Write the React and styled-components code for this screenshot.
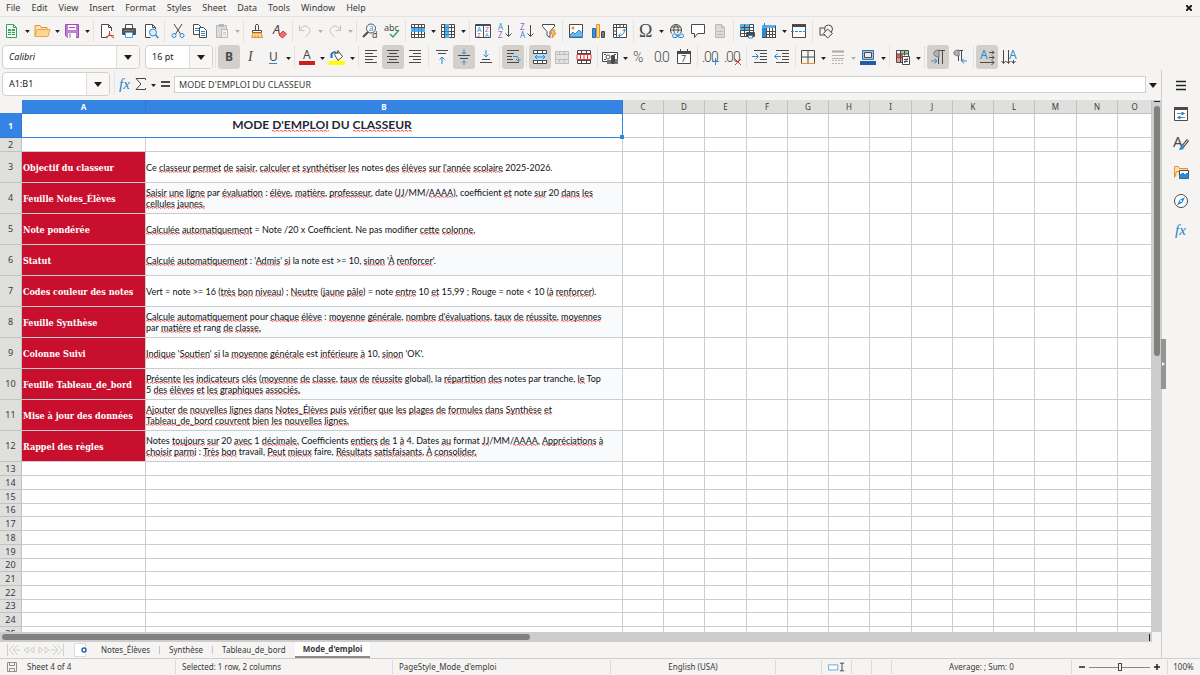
import React, { useState } from 'react';
import styled, { createGlobalStyle, css } from 'styled-components';

const UI_FONT = '"Noto Sans", "Open Sans", sans-serif';
const CELL_FONT = 'Lato, "Noto Sans", sans-serif';
const LABEL_FONT = '"DejaVu Serif Condensed", "DejaVu Serif", serif';

const INK = '#4a4a4a';
const BLUE = '#2a8bd4';
const ORANGE = '#e8902c';
const RED = '#d8383c';
const PURPLE = '#a85cc0';

const GlobalStyle = createGlobalStyle`
  * { box-sizing: border-box; }
  body {
    margin: 0;
    background: #f5f4f2;
    color: #3a3a3a;
    font: 9px/12px ${UI_FONT};
  }
  button, input {
    margin: 0;
    padding: 0;
    border: 0;
    background: none;
    color: inherit;
    font: inherit;
  }
`;

/* ---------- icons ---------- */

const s = (d, stroke = INK, fill = 'none', width = 1) => (
  <path d={d} stroke={stroke} fill={fill} strokeWidth={width} />
);
const t = (x, y, size, fill, text, extra = {}) => (
  <text x={x} y={y} fontSize={size} fill={fill} {...extra}>{text}</text>
);
const serif = { fontFamily: 'Liberation Serif, serif' };
const light = { fontFamily: 'Roboto, sans-serif', fontWeight: 300 };
const page = 'M3.5 1.5h6l3 3v10h-9z';
const grid = 'M1.5 1.5h13v13h-13zM1.5 4.5h13M1.5 8.5h13M1.5 11.5h13M4.5 1.5v13M8.5 1.5v13M11.5 1.5v13';

const ICONS = {
  new: <>{s('M2.5 1.5h7l3 3v10h-10z', '#3aa655', '#fff')}{s('M9.5 1.5v3h3', '#3aa655')}<rect x="4" y="6" width="7" height="6" fill="#3aa655" />{s('M4 8.5h7M4 10.5h7M7.5 6v6', '#d8f0dd')}</>,
  open: <>{s('M1 13.5v-11h5l1 2h6v2', ORANGE, '#fbe3b5')}{s('M1 13.5l2-7h13l-2 7z', '#eda648', '#fbd795')}</>,
  save: <>{s('M1.5 1.5h13v13h-11l-2-2z', '#9b4fb5', '#c27fd6')}<rect x="4" y="2" width="8" height="5" fill="#fff" /><rect x="4" y="10" width="8" height="5" fill="#fff" />{s('M6 10.5v4M5 4.5h6', '#9b4fb5')}</>,
  pdf: <>{s('M12.5 8v-3.5l-3-3h-7v13h6', INK, '#fff')}{s('M9.5 1.5v3h3')}{s('M7 15c3-2 4-4 3.5-7M7 14c3-2 5-2 8-1M10 10c1 2 3 4 5 5', RED)}</>,
  print: <>{s('M4.5 5v-3.5h7v3.5', INK, '#fff')}<rect x="1" y="5" width="14" height="7" rx="1" fill="#4f5356" />{s('M4.5 9.5h7v5h-7z', '#4a9fdc', '#fff')}{s('M3 7.5h10', '#7d8184')}</>,
  preview: <>{s('M12.5 6v-1.5l-3-3h-7v13h5', INK, '#fff')}{s('M9.5 1.5v3h3')}<circle cx="10" cy="9.5" r="3.5" stroke={BLUE} fill="#d8ecf9" />{s('M12.5 12l3 3', BLUE, 'none', 1.5)}</>,
  cut: <>{s('M4 1l6.5 10M12 1l-6.5 10', INK)}<circle cx="4" cy="12.5" r="2" stroke={BLUE} /><circle cx="12" cy="12.5" r="2" stroke={BLUE} /></>,
  copy: <>{s('M1.5 1.5h5l3 3v7h-8z', INK, '#fff')}{s('M3 5.5h4M3 7.5h4', BLUE)}{s('M7.5 4.5h4l3 3v7h-7z', INK, '#fff')}{s('M9 8.5h4M9 10.5h4M9 12.5h4', BLUE)}</>,
  paste: <>{s('M2.5 2.5h10v12h-10z', '#b8b8b8', '#dcdcdc')}<rect x="5" y="1" width="5" height="3" fill="#b8b8b8" />{s('M7.5 6.5h6v8h-6z', '#b8b8b8', '#f4f4f4')}{s('M9 9.5h3M9 11.5h3', '#c4c4c4')}</>,
  brush: <>{s('M6.5 7v-4.5c0-1.500 3-1.500 3 0v4.500', INK)}{s('M3.5 7.5h9v2h-9z', INK, '#fff')}{s('M4 10l-1.500 4.500h11l-1.500-4.500z', ORANGE, '#fbd795')}{s('M6 14v-2M9 14v-2', ORANGE)}</>,
  clear: <>{t(2, 11, 13, INK, 'A', { fontStyle: 'italic' })}{s('M8 12l4-4 3.5 3-4 4z', RED, '#ef6b6e')}</>,
  undo: s('M2.5 2.5v5h5M2.5 7.5c2-4 6-6 9-3 3 3 1 6-3 9', '#c2c2c2'),
  redo: s('M13.5 2.5v5h-5M13.5 7.5c-2-4-6-6-9-3-3 3-1 6 3 9', '#c2c2c2'),
  find: <><circle cx="9" cy="5.5" r="4.5" stroke={INK} fill="#fff" />{s('M6 9l-5 5', INK, 'none', 2)}{t(7, 8, 8, BLUE, 'a')}{t(10, 15, 9, INK, 'd')}</>,
  spell: <>{t(0, 8, 9, INK, 'abc')}{s('M6 11l3 3 6-7', '#36a862', 'none', 1.5)}</>,
  rows: <><rect x="2" y="2" width="12" height="12" fill="#fff" />{s(grid)}<rect x="1" y="5" width="14" height="4" fill="#58b0ec" />{s('M4.5 5v4M8.5 5v4M11.5 5v4', BLUE)}</>,
  cols: <><rect x="2" y="2" width="12" height="12" fill="#fff" />{s(grid)}<rect x="5" y="1" width="4" height="14" fill="#58b0ec" />{s('M5 4.5h4M5 8.5h4M5 11.5h4', BLUE)}</>,
  sort: <>{s('M.5 1.5h15v13h-15zM8.5 1.5v13', INK, '#fff')}{s('M0 2.5h16', INK)}{t(2, 9, 7, BLUE, 'A')}{t(2, 14, 6, PURPLE, 'Z')}{t(10, 9, 7, PURPLE, 'Z')}{t(10, 14, 6, BLUE, 'A')}</>,
  asc: <>{t(1, 7, 8, BLUE, 'A')}{t(1, 15, 8, PURPLE, 'Z')}{s('M11.5 2v11M8.5 10.5l3 3 3-3')}</>,
  desc: <>{t(1, 7, 8, PURPLE, 'Z')}{t(1, 15, 8, BLUE, 'A')}{s('M11.5 2v11M8.5 10.5l3 3 3-3')}</>,
  filter: <>{s('M1.5 1.5h12v2l-4.5 5v6l-3-2v-4l-4.5-5z', INK, '#fff')}{s('M11 7h3l-1 3h2l-4 5 1-4h-2z', ORANGE, '#fbc978')}</>,
  image: <>{s('M1.5 1.5h13v13h-13z', INK, '#fff')}<circle cx="5" cy="5" r="1.5" fill={ORANGE} />{s('M2 12l3-3 2 2 4-4 3.5 3v4h-12.5z', BLUE, '#6fb8ea')}</>,
  chart: <>{s('M2.5 5.5h3v9h-3z', '#1b6fb5', '#3b97dc')}{s('M6.5 1.5h3v13h-3z', ORANGE, '#fbd18a')}{s('M11.5 8.5h3v6h-3z', INK, '#77797b')}</>,
  pivot: <>{s('M1.5 1.5h13v13h-13zM1.5 4.5h13M4.5 1.5v13M8 1.5v3M11.5 1.5v3M1.5 8h3M1.5 11.5h3', INK, '#fff')}{s('M6.5 12.5c4 0 6-2 6-6M10.5 8l2-2 2 2M8.5 10.5l-2 2 2 2', BLUE)}</>,
  omega: t(1, 14, 18, INK, 'Ω', serif),
  link: <><circle cx="8" cy="7" r="5.5" stroke={INK} />{s('M2.5 7h11M3.5 4h9M8 1.5c-3 3-3 7 0 11M8 1.5c3 3 3 7 0 11')}<rect x="4" y="10" width="12" height="6" fill="#f5f4f2" /><rect x="4.5" y="11" width="5" height="3.5" rx="1.5" stroke={BLUE} /><rect x="10" y="11" width="5.5" height="3.5" rx="1.5" stroke={BLUE} />{s('M7.5 12.7h5', BLUE)}</>,
  comment: s('M1.5 1.5h13v9h-7l-3 4v-4h-3z', INK, '#fff'),
  header: <>{s(page, '#b9b9b9', '#dadada')}{s('M9.5 1.5v3h3M5 8.5h6M5 11.5h6', '#bdbdbd')}</>,
  printArea: <>{s('M1.5 1.5h13v12h-13z', INK, '#fff')}<rect x="1" y="1" width="10" height="7" fill="#58b0ec" />{s('M1.5 4.5h13M1.5 7.5h13M1.5 10.5h13M5.5 1.5v12M10.5 1.5v12')}<rect x="7" y="9" width="9" height="5" rx="1" fill={INK} />{s('M9.5 12.5h4v2.5h-4z', BLUE, '#fff')}</>,
  freeze: <><rect x="4" y="4" width="11" height="11" fill="#fff" /><rect x="1" y="4" width="4" height="11" fill="#2a8bd4" /><rect x="1" y="2" width="14" height="3" fill="#58b0ec" />{s('M5.5 5v10M8.5 5v10M11.5 5v10M14.5 3v12M5 8.5h10M5 11.5h10M1 14.5h14')}{s('M3.5 0v4', BLUE)}</>,
  split: <>{s('M1.5 1.5h13v13h-13z', INK, '#fff')}<rect x="1" y="1" width="14" height="3" fill={INK} /><path d="M0 8.5h16" stroke={BLUE} strokeDasharray="3 1" /></>,
  shapes: <><rect x="2" y="5" width="8" height="7" stroke={INK} /><circle cx="10.5" cy="6" r="4" stroke={INK} fill="#f5f4f2" />{s('M9.5 6l5 4.5-5 4.5-4-4.5z', INK, '#f5f4f2')}</>,

  bold: t(4, 12, 12, INK, 'B', { fontWeight: 700 }),
  italic: t(5, 12, 14, INK, 'I', { ...serif, fontStyle: 'italic' }),
  underline: <>{t(4, 12, 12, INK, 'U')}{s('M4 14.5h8', BLUE)}</>,
  fontColor: <>{t(4, 10, 12, INK, 'A')}<rect x="0" y="12" width="16" height="4" fill="#c9211e" /></>,
  fill: <>{s('M5.5 5.5l4-3 4 5-4.5 4z', INK, '#fff')}{s('M9 5v-4')}{s('M2.5 9v-4c1-2 3-2 5-1', '#1f6fb5', 'none', 2)}<rect x="0" y="12" width="16" height="4" fill="#ffff00" /></>,
  left: s('M2 1.5h12M2 4.5h8M2 7.5h12M2 10.5h8M2 13.5h12'),
  center: s('M2 1.5h12M4 4.5h8M2 7.5h12M4 10.5h8M2 13.5h12'),
  right: s('M2 1.5h12M6 4.5h8M2 7.5h12M6 10.5h8M2 13.5h12'),
  top: <>{s('M2 1.5h12M4 4.5h8')}{s('M8 15v-7M5.5 10.5l2.5-2.5 2.5 2.5', BLUE)}</>,
  middle: <>{s('M2 6.5h12M4 9.5h8')}{s('M8 0v4M6 3l2 2 2-2M8 16v-4M6 13.5l2-2 2 2', BLUE)}</>,
  bottom: <>{s('M4 10.5h8M2 13.5h12')}{s('M8 1v7M5.5 5.5l2.5 2.5 2.5-2.5', BLUE)}</>,
  wrap: <>{s('M2 1.5h12M2 4.5h7M2 7.5h5M2 10.5h6M2 13.5h12')}{s('M8 7.5h3c2 0 2.5 1 2.5 4M11 10l2.5 2.5 2-2.5', BLUE)}</>,
  merge: <>{s('M1.5 1.5h13v13h-13zM1.5 4.5h13M1.5 11.5h13M5.5 1.5v3M10.5 1.5v3M5.5 11.5v3M10.5 11.5v3', INK, '#fff')}<rect x="1" y="5" width="14" height="6" fill="#b9dff7" />{s('M3 8h10M5 6l-2 2 2 2M11 6l2 2-2 2', BLUE)}</>,
  mergeOff: s('M1.5 2.5h13v12h-13zM1.5 5.5h13M1.5 10.5h13M5.5 2.5v3M10.5 2.5v3M5.5 10.5v3M10.5 10.5v3', '#bcbcbc', '#e2e2e2'),
  unmerge: <>{s('M1.5 1.5h13v13h-13zM1.5 4.5h13M1.5 11.5h13M5.5 1.5v13M10.5 1.5v13', INK, '#fff')}{s('M1 5.5h14v5h-14zM4.5 5v6M8 5v6M11.5 5v6', RED, '#fff')}</>,
  currency: <>{s('M.5 3.5h15v9h-15z', INK, '#fff')}<circle cx="6" cy="8" r="2" stroke={INK} />{s('M2 5.5h2M12 5.5h2M2 10.5h2')}<rect x="9" y="6" width="4" height="9" rx="1" fill={INK} /><rect x="5" y="11" width="4" height="4" fill="#777" /><rect x="13" y="10" width="3" height="5" fill="#777" /></>,
  percent: t(1, 13, 14, INK, '%', light),
  number: <>{t(0, 13, 14, INK, '0', light)}{t(6, 13, 14, INK, '.', light)}{t(8, 13, 14, INK, '0', light)}</>,
  date: <>{s('M1.5 2.5h13v12h-13z', INK, '#fff')}<rect x="1" y="2" width="14" height="3" fill={INK} />{s('M4.5 0v4M11.5 0v4', INK, 'none')}{t(5, 13, 9, INK, '7')}</>,
  addDec: <>{t(-1, 13, 14, INK, '.', light)}{t(1, 13, 14, INK, '0', light)}{t(8, 13, 14, INK, '0', light)}{s('M12.5 9v7M9 12.5h7', BLUE)}</>,
  delDec: <>{t(-1, 13, 14, INK, '.', light)}{t(1, 13, 14, INK, '0', light)}{t(8, 13, 14, INK, '0', light)}{s('M10 10l6 6M16 10l-6 6', RED)}</>,
  indent: <>{s('M2 1.5h13M8 4.5h7M8 7.5h7M8 10.5h7M2 13.5h13')}{s('M0 7.5h6M3.5 4.5l3 3-3 3', BLUE)}</>,
  outdent: <>{s('M2 1.5h13M8 4.5h7M8 7.5h7M8 10.5h7M2 13.5h13')}{s('M7 7.5h-6M3.5 4.5l-3 3 3 3', BLUE)}</>,
  borders: <>{s('M1.5 1.5h13M1.5 1.5v13M14.5 1.5v13M8 1.5v13M1.5 8h13')}{s('M1 14.5h14', ORANGE)}</>,
  lineStyle: <>{s('M2 2.5h12', '#aaa', 'none', 2)}{s('M2 6.5h12M2 9.5h12', '#b5b5b5')}<path d="M2 11.5h12M2 14.5h12" stroke="#b5b5b5" strokeDasharray="2 1" /></>,
  lineColor: <>{s('M2.5 1.5h11v9h-11z', '#2a6db0', '#a9c4dc', 1)}{s('M4.5 3.5h7v5h-7z', INK, '#ececec')}<rect x="0" y="12" width="16" height="4" fill="#1f5fa5" /></>,
  conditional: <>{s('M1.5 1.5h12v12h-12z', INK, '#fff')}<rect x="2" y="5" width="6" height="4" fill="#e85a5c" /><rect x="5" y="2" width="8" height="3" fill="#8fd19a" /><rect x="2" y="10" width="6" height="3" fill="#f3a08a" />{s('M1.5 5h12M1.5 9h6M5.5 1.5v12M9.5 1.5v5')}{s('M7.5 7.5h7v8h-7z', INK, '#fff')}{s('M9 10.5h4M9 12.5h4M12.5 9l-3 5')}</>,
  ltr: <>{s('M8.5 15v-13.5M12.5 15v-13.5M7 1.5h8')}<path d="M9 1c-7 0-7 7 0 7z" fill="#b3b3b3" stroke="#777" />{s('M1 12h6M4.5 9.5l2.5 2.5-2.5 2.5', BLUE)}</>,
  rtl: <>{s('M6.5 12v-10.5M9.5 12v-10.5M5 1.5h6')}<path d="M7 1c-7 0-7 6 0 6z" fill="#b3b3b3" stroke="#777" />{s('M15 12h-5M12 9.5l-2.5 2.5 2.5 2.5', BLUE)}</>,
  horizontal: <>{t(1, 10, 12, BLUE, 'A')}{s('M10 3.5h5M13 1.5l2 2-2 2M10 8.5h5M13 6.5l2 2-2 2M1 13.5h14M12.5 11l2.5 2.5-2.5 2.5')}</>,
  vertical: <>{t(8, 10, 12, BLUE, 'A')}{s('M2.5 1v13M.5 12l2 2.5 2-2.5M7.5 1v13M5.5 12l2 2.5 2-2.5M12.5 11v3M10.5 12l2 2.5 2-2.5')}</>,

  fx: t(2, 13, 15, '#2380c8', 'fx', { ...serif, fontStyle: 'italic' }),
  sigma: s('M12.5 4v-1.5h-9.5l5 5.5-5 5.5h9.5v-1.5'),
  equals: s('M4 6h9M4 10h9', INK, 'none', 2),
  menu: s('M3 4.5h10M3 8.5h10M3 12.5h10', '#222', 'none', 1.5),
  properties: <>{s('M1.5 1.5h13v13h-13z', INK, '#fff')}<rect x="1" y="1" width="14" height="3" fill={INK} />{s('M4 7.5h8M4 11.5h8', '#888')}{s('M9.5 6v3M6.5 10v3', BLUE, 'none', 2)}</>,
  styles: <>{t(0, 12, 15, INK, 'A')}{s('M15 5l-5 6', INK, '#fff', 3)}{s('M14.5 5.5l-4 5', '#fff')}<path d="M6 15c1-4 3-5 5-4 1 3-2 4-5 4z" fill={BLUE} /></>,
  gallery: <>{s('M1.5 13.5v-11h4l1 2h8v3', ORANGE, '#fbe3b5')}{s('M1.5 13.5l2-6h3', ORANGE)}{s('M6.5 6.5h9v8h-9z', INK, '#fff')}{s('M7 14v-3l3-2 2 2 2-2 1 1v4z', BLUE, BLUE)}</>,
  navigator: <><circle cx="8" cy="8" r="6.5" stroke={INK} fill="#fff" /><path d="M12 4l-2.5 5.500-5.500 3 2.500-5.500z" fill={BLUE} /><circle cx="8" cy="8" r="1" fill="#fff" /></>,
  addSheet: <>{s('M.5 1.5h11v13h-11z', '#ddd', '#fff')}<circle cx="10" cy="8" r="2" stroke="#2a62ae" strokeWidth="1.5" /></>,
};

const Svg = styled.svg`
  display: block;
  flex: none;
  width: 16px;
  height: 16px;
  overflow: visible;
  fill: none;
  font-family: ${UI_FONT};
`;

const Icon = ({ name }) => (
  <Svg viewBox="0 0 16 16" aria-hidden="true">{ICONS[name]}</Svg>
);

const ArrowSvg = styled.svg`
  display: block;
  width: ${p => (p.$big ? 8 : 5)}px;
  height: ${p => (p.$big ? 5 : 3)}px;
  fill: ${p => (p.$dim ? '#b0b0b0' : '#1e1e1e')};
`;

const Arrow = ({ big, dim }) => (
  <ArrowSvg $big={big} $dim={dim} viewBox="0 0 8 5" aria-hidden="true">
    <path d="M0 0h8l-4 5z" />
  </ArrowSvg>
);

/* ---------- chrome ---------- */

const Window = styled.div`
  display: flex;
  flex-direction: column;
  height: 100vh;
  overflow: hidden;
`;

const MenuBar = styled.nav`
  display: flex;
  align-items: center;
  height: 17px;
  padding: 0 6px 0 1px;
  border-bottom: 1px solid #e2e1df;
`;

const MenuItem = styled.button`
  padding: 0 6px 0 5px;
`;

const CloseButton = styled.button`
  margin-left: auto;
  width: 10px;
  height: 12px;
  svg { display: block; margin: auto; }
`;

const Toolbar = styled.div`
  display: flex;
  align-items: center;
  height: ${p => p.$height}px;
  padding-left: ${p => p.$indent}px;
`;

const ToolButton = styled.button`
  display: flex;
  align-items: center;
  justify-content: center;
  flex: none;
  width: 22px;
  height: 24px;
  border-radius: 3px;
  ${p => p.$active && css`background: #d3d0cc;`}
`;

const DropButton = styled.button`
  display: flex;
  align-items: center;
  justify-content: center;
  flex: none;
  width: 8px;
  height: 24px;
  padding-top: 2px;
`;

const Separator = styled.span`
  flex: none;
  width: 1px;
  height: 22px;
  margin: 0 ${p => (p.$tight ? 1 : 2)}px 0 2px;
  background: #e4e3e1;
`;

const Combo = styled.div`
  display: flex;
  flex: none;
  width: ${p => p.$width}px;
  height: 24px;
  margin-right: ${p => p.$gap}px;
  border: 1px solid #d3d0cc;
  border-radius: 4px;
  background: #fff;
  overflow: hidden;

  input {
    flex: 1;
    min-width: 0;
    padding-left: 6px;
    font-style: ${p => (p.$italic ? 'italic' : 'normal')};
    color: #222;
  }
  button {
    display: flex;
    align-items: center;
    justify-content: center;
    width: 23px;
    border-left: 1px solid #dedbd8;
    background: #f8f7f6;
  }
`;

const Body = styled.div`
  display: flex;
  flex: 1;
  min-height: 0;
`;

const Main = styled.main`
  display: flex;
  flex-direction: column;
  flex: 1;
  min-width: 0;
`;

const FormulaBar = styled.div`
  display: flex;
  align-items: center;
  height: 30px;
  padding: 0 4px 2px 2px;
`;

const SmallTool = styled.button`
  display: flex;
  justify-content: center;
  flex: none;
  width: 16px;
`;

const FormulaInput = styled.input`
  flex: 1;
  min-width: 0;
  height: 17px;
  margin: 0 3px 0 0;
  padding-left: 4px;
  border: 1px solid #d3d0cc;
  background: #fff;
`;

const FormulaTools = styled.div`
  display: flex;
  align-items: center;
  width: 57px;
`;

const Sidebar = styled.aside`
  position: relative;
  display: flex;
  flex-direction: column;
  align-items: center;
  gap: 5px;
  flex: none;
  width: 39px;
  padding-top: 3px;
  border-left: 1px solid #d0cfcd;
`;

const SidebarHandle = styled.button`
  position: absolute;
  left: -1px;
  top: 50%;
  width: 5px;
  height: 50px;
  margin-top: -25px;
  background: #939593;
  svg { display: block; }
`;

/* ---------- sheet ---------- */

const SheetArea = styled.div`
  display: flex;
  flex: 1;
  min-height: 0;
`;

const SheetView = styled.div`
  flex: 1;
  min-width: 0;
  overflow: hidden;
  background: #fff;
`;

const Sheet = styled.table`
  width: 100%;
  table-layout: fixed;
  border-collapse: separate;
  border-spacing: 0;
  color: #111;
`;

const Col = styled.col`
  width: ${p => p.$width}px;
`;

const Heading = styled.th`
  height: ${p => p.$height}px;
  padding: 0;
  border: solid #c2c2c2;
  border-width: 0 1px 1px 0;
  background: #dfdfde;
  color: #3a3a3a;
  font: 400 9px/12px ${UI_FONT};
  font-size: ${p => (p.scope === 'col' ? 8 : 9)}px;
  text-align: center;
  ${p => p.$selected && css`
    border-color: #2f78d0;
    background: #3584e4;
    color: #fff;
    font-weight: 700;
  `}
`;

const Corner = styled.td`
  border-bottom: 1px solid #3584e4;
  background: #f5f4f2;
  padding: 0;
`;

const Cell = styled.td`
  height: ${p => p.$height}px;
  padding: 0;
  border: solid #cdcdcd;
  border-width: 0 1px 1px 0;
  font: 9px/11px ${CELL_FONT};
  white-space: pre-line;
  vertical-align: middle;
  background: ${p => (p.$shaded ? '#f8fafc' : '#fff')};
`;

const LabelCell = styled(Cell)`
  padding: 1px 0 0 1px;
  background: #c8102e;
  color: #fff;
  font: 700 9px/12px ${LABEL_FONT};
  white-space: nowrap;
`;

const TitleCell = styled(Cell)`
  position: relative;
  padding-bottom: 1px;
  border-color: #3584e4;
  color: #1f2937;
  font: 700 12px/16px ${CELL_FONT};
  text-align: center;
`;

const FillHandle = styled.span`
  position: absolute;
  right: -2px;
  bottom: -2px;
  width: 4px;
  height: 4px;
  background: #3584e4;
`;

const squiggle = `url("data:image/svg+xml,%3Csvg xmlns='http://www.w3.org/2000/svg' width='4' height='3'%3E%3Cpath d='M0 2.5L1 1L3 2.5L4 1.5' fill='none' stroke='%23e03030' stroke-width='.8'/%3E%3C/svg%3E")`;

const Misspelt = styled.span`
  background: ${squiggle} left bottom repeat-x;
`;

const VScroll = styled.div`
  flex: none;
  width: 9px;
  padding: 1px 1px 0 2px;
  background: #cdcdcd;

  &::before {
    content: '';
    display: block;
    height: 1px;
    margin-bottom: 4px;
    background: #222;
  }
`;

const VThumb = styled.div`
  width: 6px;
  height: 47%;
  border-radius: 3px;
  background: #7f817f;
`;

const HScroll = styled.div`
  display: flex;
  align-items: center;
  justify-content: space-between;
  height: 10px;
  margin-right: 9px;
  padding: 0 2px;
  background: #cdcdcd;

  &::after {
    content: '';
    width: 1px;
    height: 7px;
    background: #222;
  }
`;

const HThumb = styled.div`
  width: 46%;
  height: 6px;
  border-radius: 3px;
  background: #7f817f;
`;

const TabBar = styled.div`
  display: flex;
  height: 16px;
  padding-left: 5px;
  font-size: 8px;
`;

const TabNav = styled.button`
  width: 15px;
  svg { display: block; margin: auto; }
`;

const AddSheet = styled.button`
  display: flex;
  align-items: center;
  width: 16px;
  margin: 0 1px 0 9px;
`;

const Tab = styled.button`
  position: relative;
  height: 16px;
  padding: 0 9px 0 10px;
  ${p => p.$active && css`
    padding: 0 8px;
    background: #fff;
    border-bottom: 2px solid #8a8a8a;
    font-weight: 700;
  `}

  & + &::before {
    content: '';
    position: absolute;
    left: 0;
    top: 4px;
    width: 1px;
    height: 8px;
    background: #c4c4c4;
  }
`;

const StatusBar = styled.footer`
  display: grid;
  grid-template-columns: 176fr 217fr 218fr 165fr 46px 30px 20px 20px 180fr 96px 32px;
  height: 17px;
  border-top: 1px solid #d0cfcd;
  font-size: 8px;
`;

const StatusItem = styled.div`
  display: flex;
  align-items: center;
  justify-content: ${p => (p.$center ? 'center' : 'flex-start')};
  gap: ${p => p.$gap || 0}px;
  margin: 1px 0;
  padding: 0 ${p => (p.$center ? 0 : 6)}px;
  border-right: 1px solid ${p => (p.$last ? 'transparent' : '#dedddb')};
  white-space: nowrap;
`;

const ZoomSlider = styled.input`
  appearance: none;
  flex: 1;
  min-width: 0;
  height: 8px;
  background: linear-gradient(#8a8a8a, #8a8a8a) center / 100% 1px no-repeat;

  &::-webkit-slider-thumb {
    appearance: none;
    width: 4px;
    height: 8px;
    border: 1px solid #444;
    background: #f5f4f2;
  }
`;

const ZoomButton = styled.button`
  flex: none;
  width: 8px;
  svg { display: block; }
`;

/* ---------- data ---------- */

const MENUS = ['File', 'Edit', 'View', 'Insert', 'Format', 'Styles', 'Sheet', 'Data', 'Tools', 'Window', 'Help'];

// '|' is a separator, '!' a tight one; 'v' adds a drop-down arrow, 'dim' a disabled one
const STANDARD = [
  ['new', 'v'], ['open', 'v'], ['save', 'v'], '|',
  ['pdf'], ['print'], ['preview'], '|',
  ['cut'], ['copy'], ['paste', 'dim'], '|',
  ['brush'], ['clear'], '!',
  ['undo', 'dim'], ['redo', 'dim'], '|',
  ['find'], ['spell'], '!',
  ['rows', 'v'], ['cols', 'v'], '|',
  ['sort'], ['asc'], ['desc'], ['filter'], '|',
  ['image'], ['chart'], ['pivot'], '!',
  ['omega', 'v'], ['link'], ['comment'], ['header'], '|',
  ['printArea'], ['freeze', 'v'], ['split'], '|',
  ['shapes'],
];

const FORMATTING = [
  '|',
  ['bold', 'on'], ['italic'], ['underline', 'v'], '!',
  ['fontColor', 'v'], ['fill', 'v'], '!',
  ['left'], ['center', 'on'], ['right'], '|',
  ['top'], ['middle', 'on'], ['bottom'], '|',
  ['wrap', 'on'], '|',
  ['merge', 'on'], ['mergeOff'], ['unmerge'], '!',
  ['currency', 'v'], ['percent'], ['number'], ['date'], '|',
  ['addDec'], ['delDec'], '|',
  ['indent'], ['outdent'], '!',
  ['borders', 'v'], ['lineStyle', 'dim'], ['lineColor', 'v'], '|',
  ['conditional', 'v'], '|',
  ['ltr', 'on'], ['rtl'], '|',
  ['horizontal', 'on'], ['vertical'],
];

const COLUMNS = [
  ['A', 124], ['B', 477], ['C', 41], ['D', 41], ['E', 42], ['F', 41], ['G', 41], ['H', 41],
  ['I', 42], ['J', 41], ['K', 41], ['L', 41], ['M', 42], ['N', 41], ['O', null],
];

// words in braces are flagged by the spell checker
const ROWS = [
  ['Objectif du classeur', "Ce {classeur permet de saisir}, {calculer et synthétiser les} notes {des élèves sur l'année scolaire} 2025-2026."],
  ['Feuille Notes_Élèves', '{Saisir une ligne} par {évaluation} : {élève}, {matière}, {professeur}, date ({JJ}/MM/{AAAA}), coefficient {et} note {sur} 20 {dans les}\n{cellules jaunes.}'],
  ['Note pondérée', '{Calculée automatiquement} = Note /20 x Coefficient. Ne pas modifier {cette colonne.}'],
  ['Statut', "{Calculé automatiquement} : '{Admis}' {si} la note est >= 10, {sinon} '{À renforcer}'."],
  ['Codes couleur des notes', 'Vert = note >= 16 ({très bon niveau}) ; {Neutre} ({jaune pâle}) = note {entre} 10 {et} 15,99 ; Rouge = note < 10 ({à renforcer}).'],
  ['Feuille Synthèse', "{Calcule automatiquement} pour {chaque élève} : {moyenne générale}, {nombre d'évaluations}, {taux de réussite}, {moyennes}\npar {matière et} rang {de classe.}"],
  ['Colonne Suivi', "{Indique} '{Soutien}' {si} la {moyenne générale} est {inférieure à} 10, {sinon} 'OK'."],
  ['Feuille Tableau_de_bord', '{Présente les indicateurs clés} ({moyenne de classe}, {taux de réussite} global), la {répartition des} notes par tranche, {le} Top\n5 {des élèves et les graphiques associés.}'],
  ['Mise à jour des données', '{Ajouter de nouvelles lignes dans Notes_Élèves puis vérifier que les plages de formules dans Synthèse et}\n{Tableau_de_bord couvrent bien les nouvelles lignes.}'],
  ['Rappel des règles', 'Notes {toujours sur} 20 {avec} 1 {décimale.} Coefficients {entiers de} 1 {à} 4. Dates {au} format {JJ}/MM/{AAAA}, {Appréciations à}\n{choisir parmi} : {Très bon} travail, {Peut mieux} faire, {Résultats satisfaisants}, {À consolider.}'],
];

const BLANK_ROWS = [14, 14, 14, 13, 14, 14, 14, 13, 14, 14, 13, 14, 14];
const TABS = ['Notes_Élèves', 'Synthèse', 'Tableau_de_bord', "Mode_d'emploi"];
const PANELS = ['menu', 'properties', 'styles', 'gallery', 'navigator', 'fx'];

const SHEET_NAV = [
  ['First sheet', 'M1.5 1v12M12 2l-5 5 5 5M8 7h6M8 2l-5 5 5 5'],
  ['Previous sheet', 'M7 4l-4 3 4 3zM13 4l-4 3 4 3z'],
  ['Next sheet', 'M3 4l4 3-4 3zM9 4l4 3-4 3z'],
  ['Last sheet', 'M12.5 1v12M2 2l5 5-5 5M0 7h6M6 2l5 5-5 5'],
];

/* ---------- parts ---------- */

const Checked = ({ text }) => text.split(/[{}]/).map((part, i) => (
  i % 2 === 0
    ? part
    : part.split(' ').map((word, j) => (
      <React.Fragment key={`${i}-${j}`}>
        {j > 0 && ' '}
        <Misspelt>{word}</Misspelt>
      </React.Fragment>
    ))
));

const Tools = ({ items }) => items.map((item, i) => {
  if (typeof item === 'string') return <Separator key={i} $tight={item === '!'} />;
  const [name, mode] = item;
  return (
    <React.Fragment key={i}>
      <ToolButton aria-label={name} $active={mode === 'on'}><Icon name={name} /></ToolButton>
      {(mode === 'v' || mode === 'dim') && (
        <DropButton aria-label={`${name} options`}><Arrow dim={mode === 'dim'} /></DropButton>
      )}
    </React.Fragment>
  );
});

const ComboBox = ({ label, value, ...rest }) => (
  <Combo {...rest}>
    <input aria-label={label} defaultValue={value} />
    <button aria-label={`${label} list`}><Arrow big /></button>
  </Combo>
);

const EmptyCells = ({ from, height }) => COLUMNS.slice(from).map(([letter]) => (
  <Cell key={letter} $height={height} />
));

export default function App() {
  const [tab, setTab] = useState(3);

  return (
    <Window>
      <GlobalStyle />
      <MenuBar>
        {MENUS.map(name => <MenuItem key={name}>{name}</MenuItem>)}
        <CloseButton aria-label="Close document">
          <svg width="6" height="6" viewBox="0 0 6 6"><path d="M0 0l6 6M6 0l-6 6" stroke="#222" strokeWidth="2" /></svg>
        </CloseButton>
      </MenuBar>

      <Toolbar $indent={1} $height={27}><Tools items={STANDARD} /></Toolbar>
      <Toolbar $indent={2} $height={26}>
        <ComboBox label="Font name" value="Calibri" $width={138} $gap={5} $italic />
        <ComboBox label="Font size" value="16 pt" $width={68} $gap={0} />
        <Tools items={FORMATTING} />
      </Toolbar>

      <Body>
        <Main>
          <FormulaBar>
            <ComboBox label="Name box" value="A1:B1" $width={108} $gap={2} />
            <Separator />
            <FormulaTools>
              <SmallTool aria-label="Function wizard"><Icon name="fx" /></SmallTool>
              <SmallTool aria-label="Select function"><Icon name="sigma" /></SmallTool>
              <DropButton aria-label="Select function options"><Arrow /></DropButton>
              <SmallTool aria-label="Formula"><Icon name="equals" /></SmallTool>
            </FormulaTools>
            <FormulaInput aria-label="Input line" defaultValue="MODE D'EMPLOI DU CLASSEUR" />
            <DropButton aria-label="Expand formula bar"><Arrow big /></DropButton>
          </FormulaBar>

          <SheetArea>
            <SheetView>
              <Sheet>
                <colgroup>
                  <Col $width={22} />
                  {COLUMNS.map(([letter, width]) => (
                    width ? <Col key={letter} $width={width} /> : <col key={letter} />
                  ))}
                </colgroup>
                <thead>
                  <tr>
                    <Corner />
                    {COLUMNS.map(([letter], i) => (
                      <Heading key={letter} scope="col" $height={14} $selected={i < 2}>{letter}</Heading>
                    ))}
                  </tr>
                </thead>
                <tbody>
                  <tr>
                    <Heading scope="row" $height={24} $selected>1</Heading>
                    <TitleCell colSpan={2} $height={24}>
                      <Checked text="MODE {D'EMPLOI} DU {CLASSEUR}" />
                      <FillHandle />
                    </TitleCell>
                    <EmptyCells from={2} height={24} />
                  </tr>
                  <tr>
                    <Heading scope="row" $height={14}>2</Heading>
                    <EmptyCells from={0} height={14} />
                  </tr>
                  {ROWS.map(([label, text], i) => (
                    <tr key={label}>
                      <Heading scope="row" $height={31}>{i + 3}</Heading>
                      <LabelCell $height={31}>{label}</LabelCell>
                      <Cell $height={31} $shaded={i % 2 === 1}><Checked text={text} /></Cell>
                      <EmptyCells from={2} height={31} />
                    </tr>
                  ))}
                  {BLANK_ROWS.map((height, i) => (
                    <tr key={i}>
                      <Heading scope="row" $height={height}>{i + 13}</Heading>
                      <EmptyCells from={0} height={height} />
                    </tr>
                  ))}
                </tbody>
              </Sheet>
            </SheetView>
            <VScroll><VThumb /></VScroll>
          </SheetArea>
          <HScroll><HThumb /></HScroll>

          <TabBar>
            {SHEET_NAV.map(([label, d]) => (
              <TabNav key={label} aria-label={label}>
                <svg width="14" height="14" viewBox="0 0 14 14"><path d={d} fill="none" stroke="#cfcfcd" /></svg>
              </TabNav>
            ))}
            <AddSheet aria-label="Add sheet"><Icon name="addSheet" /></AddSheet>
            {TABS.map((name, i) => (
              <Tab key={name} $active={i === tab} onClick={() => setTab(i)}>{name}</Tab>
            ))}
          </TabBar>
        </Main>

        <Sidebar>
          {PANELS.map(name => (
            <ToolButton key={name} aria-label={name}><Icon name={name} /></ToolButton>
          ))}
          <SidebarHandle aria-label="Toggle sidebar">
            <svg width="5" height="8" viewBox="0 0 5 8"><path d="M1 2l3 2-3 2z" fill="#fff" /></svg>
          </SidebarHandle>
        </Sidebar>
      </Body>

      <StatusBar>
        <StatusItem $gap={9}>
          <svg width="12" height="12" viewBox="0 0 12 12"><path d="M1.5 1.5h9v9h-9zM3.5 1.5v3h5v-3M3.5 10.5v-3h5v3" fill="none" stroke="#8f8f8f" /></svg>
          Sheet 4 of 4
        </StatusItem>
        <StatusItem>Selected: 1 row, 2 columns</StatusItem>
        <StatusItem>PageStyle_Mode_d'emploi</StatusItem>
        <StatusItem $center>English (USA)</StatusItem>
        <StatusItem />
        <StatusItem>
          <svg width="20" height="12" viewBox="0 0 20 12">
            <path d="M.5 3.5h11v6h-11z" fill="#fff" stroke="#4a9fd0" />
            <path d="M14 1.5h5M14 10.5h5M16.5 1.5v9" fill="none" stroke="#333" />
          </svg>
        </StatusItem>
        <StatusItem />
        <StatusItem />
        <StatusItem $center>Average: ; Sum: 0</StatusItem>
        <StatusItem $gap={3}>
          <ZoomButton aria-label="Zoom out"><svg width="8" height="8" viewBox="0 0 8 8"><path d="M1 4h6" stroke="#222" strokeWidth="1.5" /></svg></ZoomButton>
          <ZoomSlider type="range" aria-label="Zoom" defaultValue="50" />
          <ZoomButton aria-label="Zoom in"><svg width="8" height="8" viewBox="0 0 8 8"><path d="M1 4h6M4 1v6" stroke="#222" strokeWidth="1.5" /></svg></ZoomButton>
        </StatusItem>
        <StatusItem $center $last>100%</StatusItem>
      </StatusBar>
    </Window>
  );
}
